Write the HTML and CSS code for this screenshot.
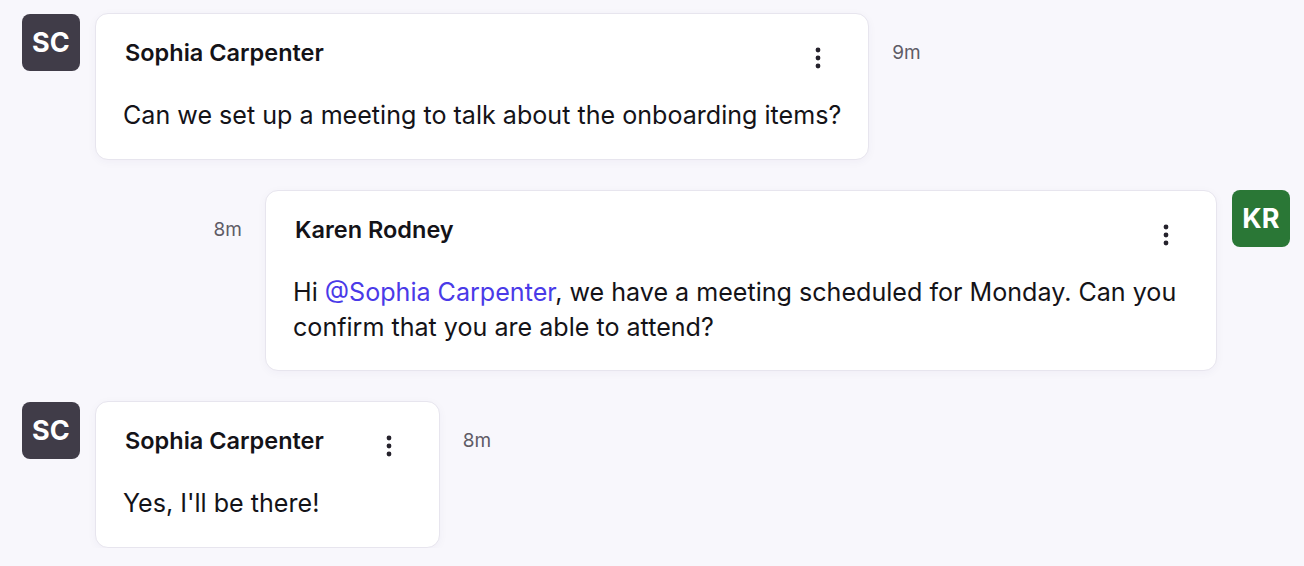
FILE: index.html
```html
<!DOCTYPE html>
<html lang="en">
<head>
<meta charset="utf-8">
<title>Chat</title>
<link rel="stylesheet" href="styles.css">
</head>
<body>
<div class="thread">
  <div class="row">
    <div class="avatar avatar-dark">SC</div>
    <div class="card">
      <div class="card-head">
        <span class="name">Sophia Carpenter</span>
        <button class="kebab" aria-label="More"><svg width="6" height="22" viewBox="0 0 6 22"><circle cx="3" cy="3" r="2.4"/><circle cx="3" cy="11" r="2.4"/><circle cx="3" cy="19" r="2.4"/></svg></button>
      </div>
      <p class="msg">Can we set up a meeting to talk about the onboarding items?</p>
    </div>
    <span class="time">9m</span>
  </div>

  <div class="row row-mine">
    <span class="time">8m</span>
    <div class="card card-wide">
      <div class="card-head">
        <span class="name">Karen Rodney</span>
        <button class="kebab" aria-label="More"><svg width="6" height="22" viewBox="0 0 6 22"><circle cx="3" cy="3" r="2.4"/><circle cx="3" cy="11" r="2.4"/><circle cx="3" cy="19" r="2.4"/></svg></button>
      </div>
      <p class="msg">Hi <span class="mention">@Sophia Carpenter</span>, we have a meeting scheduled for Monday. Can you confirm that you are able to attend?</p>
    </div>
    <div class="avatar avatar-green">KR</div>
  </div>

  <div class="row">
    <div class="avatar avatar-dark">SC</div>
    <div class="card">
      <div class="card-head">
        <span class="name">Sophia Carpenter</span>
        <button class="kebab" aria-label="More"><svg width="6" height="22" viewBox="0 0 6 22"><circle cx="3" cy="3" r="2.4"/><circle cx="3" cy="11" r="2.4"/><circle cx="3" cy="19" r="2.4"/></svg></button>
      </div>
      <p class="msg">Yes, I'll be there!</p>
    </div>
    <span class="time">8m</span>
  </div>
</div>
</body>
</html>
```

FILE: styles.css
```css
html, body {
  margin: 0;
  padding: 0;
}

body {
  background: #f8f7fc;
  font-family: "Inter", "Noto Sans", sans-serif;
  color: #141318;
}

.thread {
  display: flex;
  flex-direction: column;
  gap: 30px;
  padding: 13px 14px 0 22px;
}

.row {
  display: flex;
  align-items: flex-start;
}

.row-mine {
  justify-content: flex-end;
}

.avatar {
  width: 58px;
  height: 57px;
  flex: none;
  border-radius: 8px;
  color: #ffffff;
  font-weight: 700;
  font-size: 27px;
  display: flex;
  align-items: center;
  justify-content: center;
  margin-top: 1px;
  letter-spacing: 0.2px;
}

.avatar-dark {
  background: #403c48;
}

.avatar-green {
  background: #2a7736;
  margin-top: 0;
}

.card {
  background: #ffffff;
  border: 1px solid #e7e5ee;
  border-radius: 13px;
  box-shadow: 0 2px 10px rgba(40, 30, 90, 0.04);
  padding: 25px 27px 26px 27px;
  box-sizing: border-box;
}

.row .card {
  margin-left: 15px;
  margin-right: 23px;
}

.row-mine .card {
  margin-left: 23px;
  margin-right: 15px;
}

.card-wide {
  width: 952px;
  padding-bottom: 25px;
}

.card-head {
  display: flex;
  justify-content: space-between;
  align-items: flex-start;
  gap: 42px;
}

.name {
  font-size: 23.5px;
  font-weight: 600;
  line-height: 28px;
  margin-left: 2px;
}

.kebab {
  width: 46px;
  height: 38px;
  border: 0;
  padding: 0;
  background: transparent;
  display: flex;
  align-items: center;
  justify-content: center;
  fill: #25222c;
}

.msg {
  margin: 21px 0 0;
  font-size: 25.1px;
  line-height: 35px;
}

.mention {
  color: #4a3ae8;
}

.time {
  font-size: 19px;
  line-height: 24px;
  color: #5f5c66;
  margin-top: 28px;
  flex: none;
}
```
